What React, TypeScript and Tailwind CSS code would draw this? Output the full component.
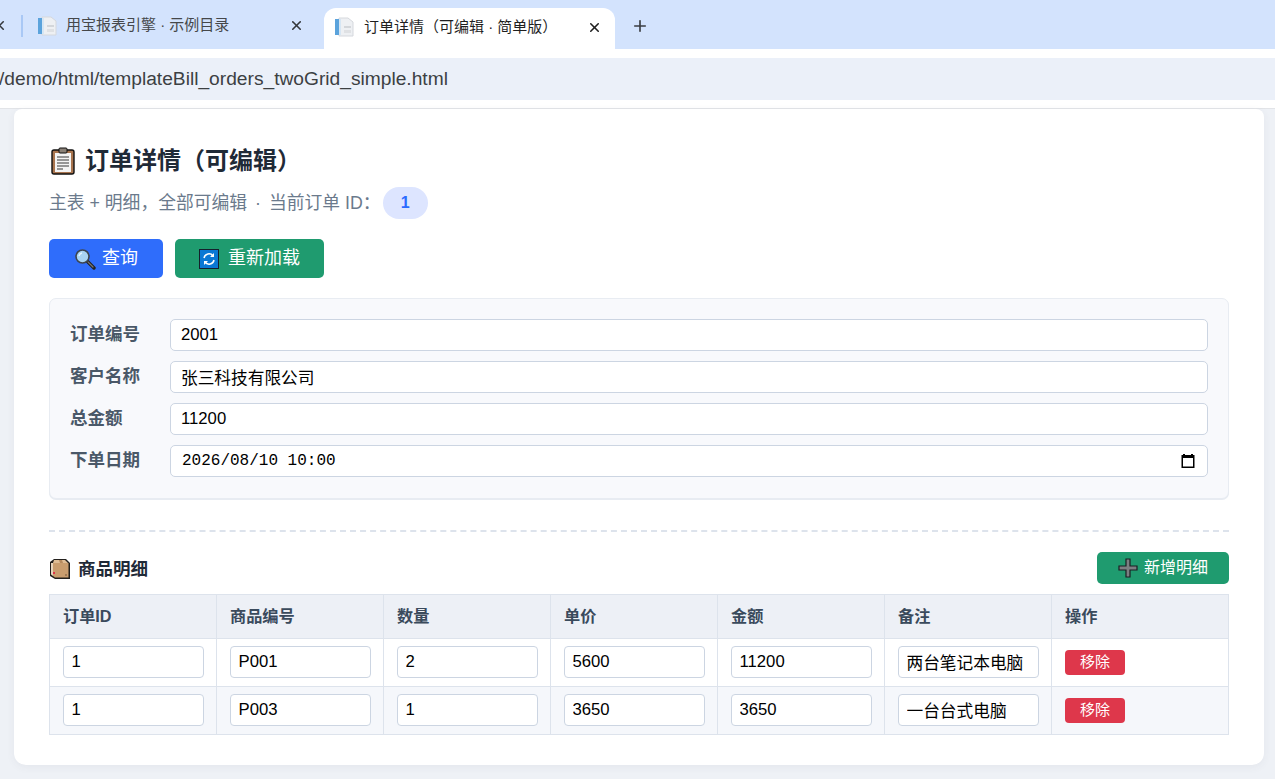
import React, { FC } from "react";
import { X, Plus } from "lucide-react";

const SANS = "font-['Liberation_Sans','Noto_Sans_CJK_SC',sans-serif]";

const PageIcon: FC = () => (
  <svg width="20" height="20" viewBox="0 0 20 20" className="shrink-0">
    <path d="M5 1h9l5 4v14H5z" fill="#eef0f3" stroke="#d5d8dd" strokeWidth="1" />
    <rect x="1" y="2" width="4" height="16" fill="#5ba3dc" />
    <rect x="5" y="2" width="2" height="16" fill="#d6e6f4" />
    <rect x="10" y="9" width="7" height="2" fill="#d3d6da" />
    <rect x="10" y="13" width="7" height="3" fill="#dfe1e4" />
  </svg>
);

const ClipboardIcon: FC = () => (
  <svg width="28" height="28" viewBox="0 0 28 28" className="shrink-0">
    <rect x="3" y="3" width="22" height="24" rx="2" fill="#a9754f" stroke="#111" strokeWidth="1.4" />
    <rect x="6" y="6" width="16" height="19" fill="#f4f4f4" />
    <rect x="10" y="1" width="8" height="5" rx="1" fill="#8a8177" stroke="#111" strokeWidth="1" />
    <path d="M8 10h12M8 13h12M8 16h12M8 19h12M8 22h6" stroke="#777" strokeWidth="1.3" />
  </svg>
);

const SearchIcon: FC = () => (
  <svg width="22" height="22" viewBox="0 0 22 22" className="shrink-0">
    <path d="M13 13l7 7" stroke="#222" strokeWidth="3.4" strokeLinecap="round" />
    <path d="M14 14l5 5" stroke="#777" strokeWidth="1.2" strokeLinecap="round" />
    <circle cx="8.5" cy="8.5" r="6.5" fill="#a8d4f2" stroke="#3d4650" strokeWidth="1.6" />
    <path d="M5 8a4 4 0 0 1 3-3" stroke="#e6f5ff" strokeWidth="1.4" fill="none" />
  </svg>
);

const ReloadIcon: FC = () => (
  <svg width="20" height="20" viewBox="0 0 20 20" className="shrink-0">
    <rect x="0.5" y="0.5" width="19" height="19" fill="#0a78d4" stroke="#14202c" />
    <path d="M5 9a5 5 0 0 1 9-2M15 11a5 5 0 0 1-9 2" stroke="#fff" strokeWidth="1.5" fill="none" />
    <path d="M15 4v4h-4zM5 16v-4h4z" fill="#fff" />
  </svg>
);

const BoxIcon: FC = () => (
  <svg width="22" height="22" viewBox="0 0 22 22" className="shrink-0">
    <path d="M1 4l4-3h12l4 4v16H6l-5-3z" fill="#23201d" />
    <path d="M5 2h11l3 3H4z" fill="#dfbd95" />
    <path d="M4 5h15.500v14.500H6L4 18z" fill="#c99d6e" />
    <path d="M2 5l2 0v13l-2-1.500z" fill="#e8d4bc" />
    <path d="M10 2h3l1 3h-3z" fill="#b58a5e" />
    <rect x="4" y="14" width="2" height="2" fill="#e0344a" />
    <rect x="16" y="16" width="2" height="2" fill="#a07a54" />
  </svg>
);

const CrossIcon: FC = () => (
  <svg width="20" height="20" viewBox="0 0 20 20" className="shrink-0">
    <path d="M8 1h4v7h7v4h-7v7H8v-7H1V8h7z" fill="#7c7f82" stroke="#1b1f22" strokeWidth="1.200" />
  </svg>
);

const CalendarIcon: FC = () => (
  <svg width="16" height="16" viewBox="0 0 16 16">
    <path d="M3 1h2v1h6V1h2v1h1.500v13h-13V2H3z" fill="#000" />
    <rect x="3" y="5" width="10" height="8.500" fill="#fff" />
  </svg>
);

const Field: FC<{ label: string; value: string; mono?: boolean }> = ({ label, value, mono }) => (
  <div className="flex items-center">
    <label className="w-[100px] shrink-0 pb-[2px] text-[17.5px] font-bold text-[#4a5868]">{label}</label>
    <input
      readOnly
      value={value}
      className={
        mono
          ? "h-8 min-w-0 flex-1 rounded-[5px] border border-[#ccd5e2] bg-white pl-[11px] pr-2.5 font-['Liberation_Mono',monospace] text-[16px] text-black outline-none"
          : "h-8 min-w-0 flex-1 rounded-[5px] border border-[#ccd5e2] bg-white px-2.5 text-[16.7px] text-black outline-none"
      }
    />
  </div>
);

const Cell: FC<{ value: string }> = ({ value }) => (
  <td className="border border-[#dde3ec] px-[13px] align-middle">
    <input
      readOnly
      value={value}
      className="mb-[1px] block h-8 w-[141px] rounded-[4px] border border-[#ccd5e2] bg-white px-[7.5px] text-[16.7px] text-black outline-none"
    />
  </td>
);

const columns = ["订单ID", "商品编号", "数量", "单价", "金额", "备注", "操作"];

const rows = [
  ["1", "P001", "2", "5600", "11200", "两台笔记本电脑"],
  ["1", "P003", "1", "3650", "3650", "一台台式电脑"],
];

const App: FC = () => {
  return (
    <div className={`${SANS} h-[779px] w-[1275px] overflow-hidden bg-white`}>
      {/* browser tabs */}
      <div className="flex h-[49px] items-end bg-[#d3e3fd] text-[15px]">
        <div className="flex h-[41px] w-[324px] shrink-0 items-center pb-[6px] text-[#45474a]">
          <X size={15} strokeWidth={2.500} className="-ml-2 shrink-0 text-[#33363a]" />
          <div className="ml-[14px] h-[22px] w-0.5 shrink-0 bg-[#a9c8f5]" />
          <div className="ml-[14px] flex flex-1 items-center gap-[9px]">
            <PageIcon />
            <span className="whitespace-nowrap">用宝报表引擎 · 示例目录</span>
            <X size={15} strokeWidth={2.500} className="ml-auto mr-[20px] text-[#33363a]" />
          </div>
        </div>
        <div className="flex h-[41px] w-[291px] shrink-0 items-center gap-[10px] rounded-t-[12px] bg-white pb-[3px] pl-[10px] pr-[13px] text-[#1f1f1f]">
          <PageIcon />
          <span className="whitespace-nowrap">订单详情（可编辑 · 简单版）</span>
          <X size={15} strokeWidth={2.500} className="ml-auto text-[#1f1f1f]" />
        </div>
        <Plus size={18} strokeWidth={2.200} className="mb-[14px] ml-4 text-[#3a3d41]" />
      </div>
      {/* address bar */}
      <div className="flex h-[59px] items-end bg-white">
        <div className="mb-2 flex h-[42px] w-full items-center overflow-hidden bg-[#ebf0f9] text-[19.2px] text-[#3c4043]">
          <span className="-ml-[1px] whitespace-nowrap">/demo/html/templateBill_orders_twoGrid_simple.html</span>
        </div>
      </div>
      {/* page */}
      <div className="h-[671px] border-t border-[#e2e4e8] bg-[#eef1f6] pl-[14px] pr-[11px]">
        <div className="h-[656px] rounded-b-[12px] rounded-t-[8px] bg-white px-[35px] pt-[36px] shadow-[0_2px_8px_rgba(60,70,90,0.06)]">
          <h1 className="flex h-8 items-center gap-2 text-[24px] font-bold text-[#1f2a37]">
            <ClipboardIcon />
            <span>订单详情（可编辑）</span>
          </h1>
          <div className="mt-[10px] flex items-center text-[17.8px] text-[#6b7a8c]">
            <span>主表 + 明细，全部可编辑</span>
            <span className="mx-[8px]">·</span>
            <span>当前订单 ID：</span>
            <span className="ml-[2px] flex h-8 w-[45px] items-center justify-center rounded-full bg-[#dde5ff] text-[16px] font-bold text-[#2b6bff]">1</span>
          </div>
          <div className="mt-5 flex gap-3">
            <button className="flex h-[39px] w-[114px] items-center justify-center gap-[6px] rounded-[5px] bg-[#2f6dfb] text-[18px] text-white">
              <SearchIcon />
              查询
            </button>
            <button className="flex h-[39px] w-[149px] items-center justify-center gap-[9px] rounded-[5px] bg-[#1f9b6f] text-[18px] text-white">
              <ReloadIcon />
              重新加载
            </button>
          </div>
          <div className="mt-5 flex h-[201px] flex-col gap-2.5 rounded-[7px] border border-[#e8ecf2] bg-[#f8f9fc] p-5 shadow-[0_1px_0_#e8ecf2]">
            <Field label="订单编号" value="2001" />
            <Field label="客户名称" value="张三科技有限公司" />
            <Field label="总金额" value="11200" />
            <div className="relative">
              <Field label="下单日期" value="2026/08/10 10:00" mono />
              <span className="absolute right-[12px] top-2"><CalendarIcon /></span>
            </div>
          </div>
          <div className="mt-[31px] border-t-2 border-dashed border-[#dde3ec]" />
          <div className="mt-5 flex h-8 items-center justify-between">
            <div className="flex items-center gap-[7px] pt-[2px] text-[17.5px] font-bold text-[#1f2a37]">
              <BoxIcon />
              商品明细
            </div>
            <button className="flex h-8 w-[132px] items-center justify-center gap-[6px] rounded-[5px] bg-[#1f9b6f] text-[16px] text-white">
              <CrossIcon />
              新增明细
            </button>
          </div>
          <table className="mt-2.5 w-[1179px] table-fixed border-collapse">
            <colgroup>
              <col className="w-[167px]" />
              <col className="w-[167px]" />
              <col className="w-[167px]" />
              <col className="w-[167px]" />
              <col className="w-[167px]" />
              <col className="w-[167px]" />
              <col className="w-[177px]" />
            </colgroup>
            <thead>
              <tr className="h-11 bg-[#edf0f6]">
                {columns.map((c) => (
                  <th key={c} className="border border-[#dde3ec] px-[13px] text-left text-[16.2px] font-bold text-[#3a4a5c]">{c}</th>
                ))}
              </tr>
            </thead>
            <tbody>
              {rows.map((row, i) => (
                <tr key={i} className={i % 2 === 1 ? "h-12 bg-[#f5f7fb]" : "h-12 bg-white"}>
                  {row.map((v, j) => <Cell key={j} value={v} />)}
                  <td className="border border-[#dde3ec] px-[13px] align-middle">
                    <button className="flex h-[25px] w-[60px] items-center justify-center rounded-[4px] bg-[#de374b] text-[15px] text-white">移除</button>
                  </td>
                </tr>
              ))}
            </tbody>
          </table>
        </div>
      </div>
    </div>
  );
};

export default App;
